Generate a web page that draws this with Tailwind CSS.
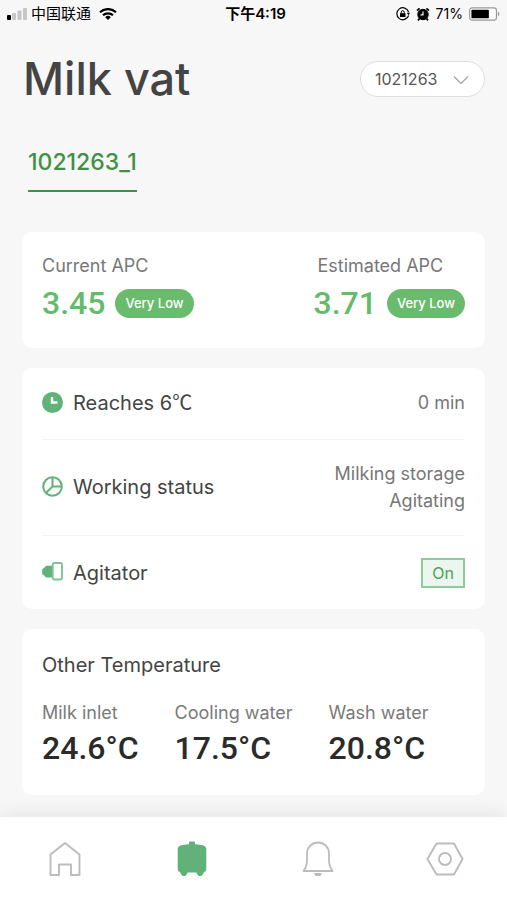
<!DOCTYPE html>
<html lang="en">
<head>
<meta charset="utf-8">
<meta name="viewport" content="width=device-width, initial-scale=1">
<title>Milk vat</title>
<script src="https://cdn.jsdelivr.net/npm/@tailwindcss/browser@4"></script>
</head>
<body class="flex min-h-screen flex-col bg-[#f7f7f7] font-['Inter','Noto_Sans_CJK_SC',sans-serif] text-[#444]">

<!-- Status bar -->
<div class="grid h-7 grid-cols-3 items-center px-[7px] text-sm text-black">
  <div class="flex items-center gap-1">
    <svg class="h-3 w-5" viewBox="0 0 20 12" aria-hidden="true">
      <rect x="0" y="7" width="4" height="5" rx="1"/>
      <g fill="#c6c6c6"><rect x="5" y="5" width="4" height="7" rx="1"/><rect x="10.500" y="2.500" width="4" height="9.500" rx="1"/><rect x="16" y="0" width="4" height="12" rx="1"/></g>
    </svg>
    <span class="whitespace-nowrap text-[15px]">中国联通</span>
    <svg class="ml-1 h-3 w-[18px]" viewBox="0 0 18 12" fill="none" stroke="#000" stroke-width="2.200" aria-hidden="true">
      <path d="M1 4.300a11.500 11.500 0 0 1 16 0M4 7.300a7.200 7.200 0 0 1 10 0"/><path d="M9 12L6.200 9.200a4 4 0 0 1 5.600 0z" fill="#000" stroke="none"/>
    </svg>
  </div>
  <div class="pl-1 text-center text-[15px] font-semibold">下午4:19</div>
  <div class="flex items-center justify-end gap-[6px]">
    <svg class="h-[14px] w-[14px]" viewBox="0 0 14 14" fill="none" stroke="#000" aria-hidden="true">
      <path d="M12.600 8.500A6 6 0 1 1 12.600 5" stroke-width="1.200"/><path d="M10.800 5.800h3.200l-1.500 2.400z" fill="#000" stroke="none"/>
      <rect x="4" y="6.200" width="5.500" height="3.800" fill="#000" stroke="none"/><path d="M5.200 6.500V5.200a1.500 1.500 0 0 1 3 0v1.300"/>
    </svg>
    <svg class="h-[14px] w-[14px]" viewBox="0 0 14 14" fill="none" stroke="#000" aria-hidden="true">
      <circle cx="7" cy="7.500" r="5.200" fill="#000"/><path d="M1 3.600L3.600 1.300M13 3.600L10.400 1.300M3.500 11.500L2 13.300M10.500 11.500L12 13.300" stroke-width="1.800"/><path d="M7 4.500v3.300H4.500" stroke="#f7f7f7" stroke-width="1.200"/>
    </svg>
    <span class="text-sm">71%</span>
    <svg class="h-[14px] w-[31px]" viewBox="0 0 32 14" aria-hidden="true">
      <rect x=".7" y=".7" width="27.600" height="12.600" rx="2.500" fill="#fff" stroke="#999" stroke-width="1.200"/><rect x="2.500" y="2.500" width="18" height="9" rx="1"/><path d="M29.800 4.500c2 .8 2 4.200 0 5z" fill="#999"/>
    </svg>
  </div>
</div>

<header class="flex items-center justify-between pt-6 pr-[22px] pl-[23px]">
  <h1 class="text-[45px] leading-[54px] font-medium">Milk vat</h1>
  <div class="relative">
    <select aria-label="Vat" class="h-9 w-[125px] appearance-none rounded-full border border-[#dedede] bg-white pl-[14px] text-base text-[#555]">
      <option>1021263</option>
    </select>
    <svg class="pointer-events-none absolute top-[15px] right-4 h-2 w-4" viewBox="0 0 16 8" fill="none" stroke="#a5a5a5" stroke-width="1.300" aria-hidden="true"><path d="M1 .5l7 7 7-7"/></svg>
  </div>
</header>

<nav class="px-7 pt-10" aria-label="Vats">
  <a href="#" class="inline-block border-b-2 border-[#3f9145] pb-3 text-[23px] leading-8 font-medium text-[#3f9145]">1021263_1</a>
</nav>

<main class="flex flex-col gap-5 px-[22px] pt-10 pb-[21px]">
  <section class="flex justify-between rounded-[10px] bg-white px-5 pt-[22px] pb-6">
    <div>
      <h2 class="text-lg leading-6 text-[#777]">Current APC</h2>
      <div class="mt-1 flex items-center gap-[10px]">
        <span class="font-['Roboto',sans-serif] text-[32px] leading-[42px] font-medium text-[#64bb6a]">3.45</span>
        <span class="rounded-full bg-[#6abb6e] px-[10px] text-[13px] leading-[29px] font-medium text-white">Very Low</span>
      </div>
    </div>
    <div>
      <h2 class="pl-1 text-lg leading-6 text-[#777]">Estimated APC</h2>
      <div class="mt-1 flex items-center justify-end gap-[10px]">
        <span class="font-['Roboto',sans-serif] text-[32px] leading-[42px] font-medium text-[#64bb6a]">3.71</span>
        <span class="rounded-full bg-[#6abb6e] px-[10px] text-[13px] leading-[29px] font-medium text-white">Very Low</span>
      </div>
    </div>
  </section>

  <section class="rounded-[10px] bg-white px-5">
    <div class="flex h-[72px] items-center justify-between border-b border-[#f4f4f4] pb-[2px]">
      <div class="flex items-center gap-[10px]">
        <svg class="size-[21px]" viewBox="0 0 21 21" aria-hidden="true"><circle cx="10.500" cy="10.500" r="10.500" fill="#61b278"/><path d="M10 5v5.500H15.500" fill="none" stroke="#fff" stroke-width="2.400"/></svg>
        <span class="text-xl">Reaches 6<span class="font-['Noto_Sans_CJK_SC',sans-serif] leading-none">℃</span></span>
      </div>
      <span class="text-lg text-[#777]">0 min</span>
    </div>
    <div class="flex h-24 items-center justify-between border-b border-[#f4f4f4] pb-[2px]">
      <div class="flex items-center gap-[10px]">
        <svg class="size-[21px]" viewBox="0 0 21 21" fill="none" stroke="#61b278" stroke-width="2" aria-hidden="true"><circle cx="10.500" cy="10.500" r="9.300"/><path d="M10.500 1v9.500H20M10.500 10.500L3.800 17"/></svg>
        <span class="text-xl">Working status</span>
      </div>
      <span class="text-right text-lg leading-[27px] text-[#777]">Milking storage<br>Agitating</span>
    </div>
    <div class="flex h-[73px] items-center justify-between">
      <div class="flex items-center gap-[10px]">
        <svg class="size-[21px]" viewBox="0 0 21 21" aria-hidden="true"><path d="M10 3.800H4L2.800 5.300.2 7.200v5L2.800 14 4 15.500H10z" fill="#61b278"/><rect x="10.700" y="1" width="9.300" height="16.500" rx="1.500" fill="#fff" stroke="#7fc394" stroke-width="1.900"/></svg>
        <span class="text-xl">Agitator</span>
      </div>
      <button type="button" class="h-[30px] w-11 border-2 border-[#8ccb9b] bg-[#ebf6ee] text-base leading-none text-[#4f9e5a]">On</button>
    </div>
  </section>

  <section class="rounded-[10px] bg-white px-5 pt-[22px] pb-[26px]">
    <h2 class="text-xl">Other Temperature</h2>
    <dl class="mt-5 flex gap-9 whitespace-nowrap">
      <div><dt class="text-lg leading-7 text-[#7a7a7a]">Milk inlet</dt><dd class="font-['Roboto',sans-serif] text-[32px] leading-[42px] font-medium text-[#2b2b2b]">24.6°C</dd></div>
      <div><dt class="text-lg leading-7 text-[#7a7a7a]">Cooling water</dt><dd class="font-['Roboto',sans-serif] text-[32px] leading-[42px] font-medium text-[#2b2b2b]">17.5°C</dd></div>
      <div><dt class="text-lg leading-7 text-[#7a7a7a]">Wash water</dt><dd class="font-['Roboto',sans-serif] text-[32px] leading-[42px] font-medium text-[#2b2b2b]">20.8°C</dd></div>
    </dl>
  </section>
</main>

<nav class="mt-auto grid grid-cols-4 bg-white pt-[22px] pb-[21px] shadow-[0_-4px_16px_rgba(0,0,0,0.07)]" aria-label="Main">
  <a href="#" aria-label="Home" class="ml-[3px] flex justify-center"><svg class="size-10" viewBox="0 0 40 40" fill="none" stroke="#bcbcbc" stroke-width="1.900" stroke-linejoin="round" aria-hidden="true"><path d="M20 4L5.500 15.500V36H14V25.500H26V36H34.500V15.500z"/></svg></a>
  <a href="#" aria-label="Milk vat" class="ml-[3px] flex justify-center"><svg class="size-10" viewBox="0 0 40 40" fill="#61b278" aria-hidden="true"><path d="M17 3.500Q17 2.500 18 2.500h4q1 0 1 1V5.300c4 .3 7.500.8 9.500 1.700q1.800.8 1.800 3V30q0 2.500-2.300 3.200L30.300 36q-.5 1-1.500 1h-1.600q-1 0-1.500-1L24.300 33.500h-8.600L14.300 36q-.5 1-1.500 1h-1.600q-1 0-1.500-1L8 33.200Q5.700 32.500 5.700 30V10q0-2.200 1.800-3c2-.9 5.500-1.400 9.500-1.700z"/></svg></a>
  <a href="#" aria-label="Alerts" class="ml-[3px] flex justify-center"><svg class="size-10" viewBox="0 0 40 40" fill="none" stroke="#bcbcbc" stroke-width="1.800" aria-hidden="true"><path d="M5.500 32C8 28.500 9 26 9 21V14.500a11 11 0 0 1 22 0V21c0 5 1 7.500 3.500 11z" stroke-linejoin="round"/><path d="M16 34h8l-1.500 3h-5z" fill="#bcbcbc" stroke="none"/></svg></a>
  <a href="#" aria-label="Settings" class="ml-[3px] flex justify-center"><svg class="size-10" viewBox="0 0 40 40" fill="none" stroke="#bcbcbc" stroke-width="1.900" stroke-linejoin="round" aria-hidden="true"><path d="M11.500 4.500h17.500L37.500 20 29 35.500H11.500L2.500 20z"/><circle cx="20" cy="20" r="6"/></svg></a>
</nav>
</body>
</html>
